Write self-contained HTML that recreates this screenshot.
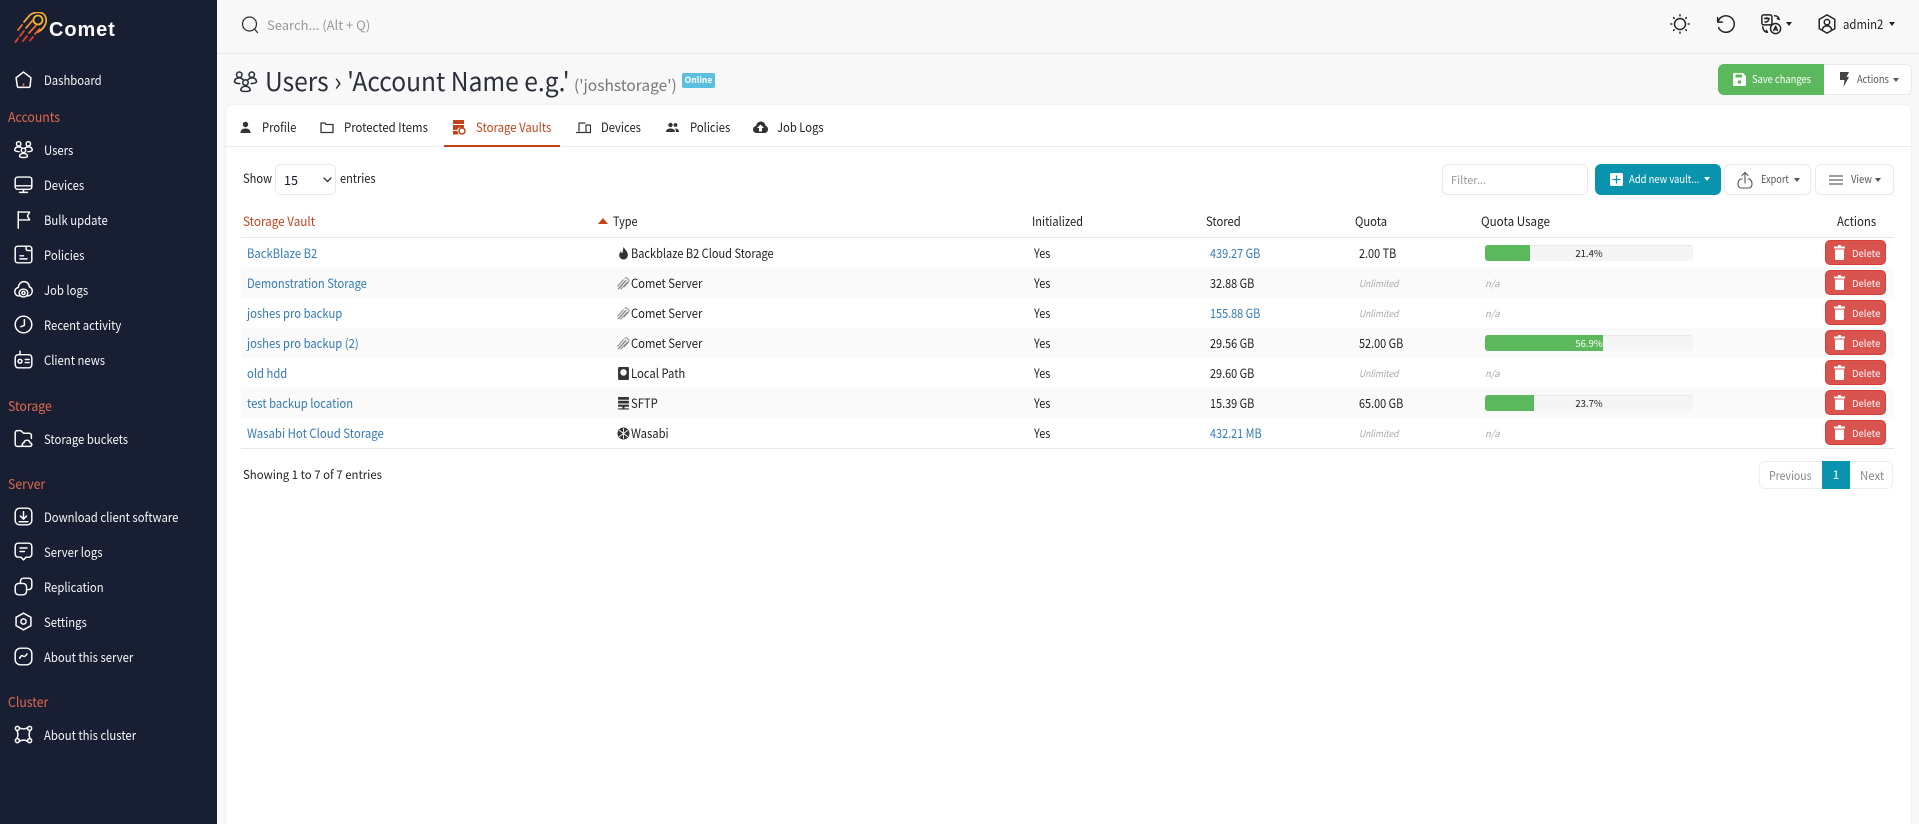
<!DOCTYPE html>
<html lang="en"><head><meta charset="utf-8"><title>Comet - Storage Vaults</title>
<style>
*{box-sizing:border-box}
html,body{margin:0;padding:0;width:1919px;height:824px;overflow:hidden;background:#f8f8f8}
body{font-family:"Noto Sans CJK JP","Liberation Sans",sans-serif;font-size:12.5px;color:#222;position:relative}
.a,.t,.i{position:absolute}
.t{white-space:nowrap;line-height:20px;height:20px;transform:scaleX(.9);transform-origin:0 50%}
.o{transform:none}
.n{transform:scaleX(.87)}
a{color:inherit;text-decoration:none}
#side{left:0;top:0;width:217px;height:824px;background:#181f33;position:absolute;color:#fff}
#side .t{left:44px;font-size:13px;color:#f4f5f7;transform:scaleX(.87)}
#side .h{left:8px;font-size:13.5px;color:#e2694c;transform:scaleX(.91)}
#side svg{position:absolute;left:13px;width:21px;height:21px;fill:none;stroke:#fff;stroke-width:1.7;stroke-linecap:round;stroke-linejoin:round}
#top{position:absolute;left:217px;top:0;width:1702px;height:54px;border-bottom:1px solid #e8e8e8;background:#f8f8f8}
#card{position:absolute;left:226px;top:105px;width:1685px;height:719px;background:#fff;border-radius:6px 6px 0 0;box-shadow:0 0 2px rgba(0,0,0,.08)}
.i{fill:none;stroke:#222;stroke-width:1.6;stroke-linecap:round;stroke-linejoin:round}
.car{position:absolute;width:0;height:0;border-left:3.5px solid transparent;border-right:3.5px solid transparent;border-top:4px solid #222}
.btn{position:absolute;background:#fff;border:1px solid #e9e9e9;border-radius:6px}
.stripe{position:absolute;left:241px;width:1653px;height:30px;background:#fafafa}
.l{color:#337ab7}
.g{color:#a8a8a8;font-style:italic;font-size:9.5px;transform:scaleX(.9)}
.na{transform:none}
.bar{position:absolute;left:1485px;width:208px;height:16px;background:#f5f5f5;border-radius:3px;overflow:hidden;box-shadow:inset 0 1px 1px rgba(0,0,0,.06)}
.bar i{position:absolute;left:0;top:0;bottom:0;background:#5cb85c}
.bar b{position:absolute;left:0;right:0;top:0;line-height:16px;text-align:center;font-size:9.5px;font-weight:400;color:#222}
.del{position:absolute;left:1825px;width:61px;height:25px;background:#d9534f;border:1px solid #d43f3a;border-radius:5px;color:#fff;font-size:9.5px;line-height:24px;padding-left:26px}
.del svg{position:absolute;left:8px;top:4px;width:11px;height:15px;fill:#fff}
.th{font-size:12.5px;color:#222}
.ty{position:absolute;left:617px;width:13px;height:13px;fill:#333}
</style></head><body>
<svg width="0" height="0" style="position:absolute"><defs>
<symbol id="trash" viewBox="0 0 11 15"><path d="M4 0h3v1.500h4V3.500H0V1.500h4zM1 4.500h9V13.500a1.500 1.500 0 0 1-1.500 1.500h-6A1.500 1.500 0 0 1 1 13.500z"/></symbol>
<symbol id="comet" viewBox="0 0 13 13"><path d="M.8 12.200 8.500 3.500M.5 9.500 6.500 2.500M3.500 12.500 10.500 5M2 11.500 9.500 3M7.500 1.500 9.500.8 12 3l-.5 2-4.500 5" fill="none" stroke="#8a8a8a" stroke-width="1"/></symbol>
</defs></svg>

<nav id="side">
<svg style="left:14px;top:12px;width:36px;height:36px;stroke:none" viewBox="0 0 36 36"><g fill="none" stroke-linecap="round" stroke-width="1.800">
<circle cx="24" cy="8" r="4.500" stroke="#f4b52e"/>
<path d="M16 3C19 .5 24-.5 28 1c4 2 5 7 3.500 11-1.300 3.500-4 6-7.500 8" stroke="#f2a82f"/>
<path d="M16 3 10 10" stroke="#f2a030"/><path d="M8 13 4 18" stroke="#ee7a32"/>
<path d="M19 8 12 16" stroke="#f08a32"/><path d="M10 19 6 24M4 26.500 1.500 30" stroke="#df4a2e"/>
<path d="M22 13.500 15 21" stroke="#ea6a30"/><path d="M13 24 9 29" stroke="#dc3f2e"/>
<path d="M25.500 17 21 22" stroke="#e8602f"/><path d="M19 25 16 28.500" stroke="#dc3f2e"/></g></svg>
<div class="t o" style="left:49px;top:16px;height:28px;line-height:28px;font-family:'Liberation Sans',sans-serif;font-weight:700;font-size:20px;letter-spacing:.9px;color:#fff;transform:none">Comet</div>

<svg style="top:69px" viewBox="0 0 24 24"><path d="M3.500 10 12 3.500l8.500 6.500-1 10a1.500 1.500 0 0 1-1.500 1H6.500a1.500 1.500 0 0 1-1.500-1z"/><path d="M12 17v3" stroke="#e2694c"/></svg>
<div class="t" style="top:70px">Dashboard</div>
<div class="t h" style="top:106px">Accounts</div>

<svg style="top:139px" viewBox="0 0 24 24"><circle cx="6.500" cy="5.500" r="2.500"/><circle cx="17.500" cy="5.500" r="2.500"/><circle cx="12" cy="13" r="2.500"/><path d="M2 13c0-3 2-4 4.500-4s3 .5 4 1.500M22 13c0-3-2-4-4.500-4s-3 .5-4 1.500M2 13c1 1 3 1.500 5 1.500M22 13c-1 1-3 1.500-5 1.500M7.500 20c0-2.500 2-3.500 4.500-3.500s4.500 1 4.500 3.500c-1 1.500-8 1.500-9 0z"/></svg>
<div class="t" style="top:140px">Users</div>
<svg style="top:174px" viewBox="0 0 24 24"><rect x="2.500" y="3.500" width="19" height="14" rx="3"/><path d="M2.500 13.500h19M12 17.500v3.500M7.500 21h9"/></svg>
<div class="t" style="top:175px">Devices</div>
<svg style="top:209px" viewBox="0 0 24 24"><path d="M6 22V3M6 3.500h13l-2.500 4.500 2.500 4.500H6"/></svg>
<div class="t" style="top:210px">Bulk update</div>
<svg style="top:244px" viewBox="0 0 24 24"><path d="M6 2.500h12.500a3 3 0 0 1 3 3v13a3 3 0 0 1-3 3h-13a3 3 0 0 1-3-3V5.500a3 3 0 0 1 3-3zM8 17h8M8 13.500h4M15 2.500v3a2 2 0 0 0 2 2h4.500"/></svg>
<div class="t" style="top:245px">Policies</div>
<svg style="top:279px" viewBox="0 0 24 24"><path d="M7 19.500c-3 0-5-2.200-5-5 0-2.600 1.800-4.500 4-4.800C6.500 5.800 9 3 12.500 3c3.600 0 6 2.700 6.300 6 2 .8 3.200 2.500 3.200 4.800 0 3-2 5.200-5 5.700"/><ellipse cx="12" cy="16" rx="5" ry="4.500"/><circle cx="12" cy="16" r="1.800"/></svg>
<div class="t" style="top:280px">Job logs</div>
<svg style="top:314px" viewBox="0 0 24 24"><circle cx="12" cy="12" r="9.500"/><path d="M13 6.500v6.500l-4 1.500"/></svg>
<div class="t" style="top:315px">Recent activity</div>
<svg style="top:349px" viewBox="0 0 24 24"><rect x="2.500" y="6.500" width="19" height="15" rx="3.500"/><path d="M8 6.500V2.500"/><circle cx="8" cy="14" r="2.200"/><path d="M14 12h4.500M14 15.500h4.500"/></svg>
<div class="t" style="top:350px">Client news</div>
<div class="t h" style="top:395px">Storage</div>
<svg style="top:428px" viewBox="0 0 24 24"><path d="M10 21H5a2.500 2.500 0 0 1-2.500-2.500v-13A2.500 2.500 0 0 1 5 3h4l3 3h6.500A2.500 2.500 0 0 1 21 8.500V12"/><path d="M12.500 21c-1.500 0-2-1-2-2s.8-2 2-2c.2-1.800 1.500-3 3.500-3s3.300 1.200 3.500 3c1.200 0 2 1 2 2s-.8 2-2 2z"/></svg>
<div class="t" style="top:429px">Storage buckets</div>
<div class="t h" style="top:473px">Server</div>
<svg style="top:506px" viewBox="0 0 24 24"><rect x="2.500" y="2.500" width="19" height="19" rx="5"/><path d="M12 6.500v8M8.500 11.500 12 15l3.500-3.500M7 18h10"/></svg>
<div class="t" style="top:507px">Download client software</div>
<svg style="top:541px" viewBox="0 0 24 24"><path d="M6 2.500h12a3.500 3.500 0 0 1 3.500 3.500v9a3.500 3.500 0 0 1-3.500 3.500h-3l-3 3-3-3H6A3.500 3.500 0 0 1 2.500 15V6A3.500 3.500 0 0 1 6 2.500zM8 8h8M8 12h5"/></svg>
<div class="t" style="top:542px">Server logs</div>
<svg style="top:576px" viewBox="0 0 24 24"><rect x="2.500" y="8.500" width="13" height="13" rx="4"/><path d="M8.500 8.500V6a3.500 3.500 0 0 1 3.500-3.500h6A3.500 3.500 0 0 1 21.500 6v6a3.500 3.500 0 0 1-3.500 3.500h-2.500"/></svg>
<div class="t" style="top:577px">Replication</div>
<svg style="top:611px" viewBox="0 0 24 24"><path d="M12 2.500l8.500 4.700v9.600L12 21.500l-8.500-4.700V7.200z"/><circle cx="12" cy="12" r="3"/></svg>
<div class="t" style="top:612px">Settings</div>
<svg style="top:646px" viewBox="0 0 24 24"><rect x="2.500" y="2.500" width="19" height="19" rx="6"/><path d="M7.500 14c1.500-3 2.500-3.500 4-2.500s2.500.5 4.500-2.500"/></svg>
<div class="t" style="top:647px">About this server</div>
<div class="t h" style="top:691px">Cluster</div>
<svg style="top:724px" viewBox="0 0 24 24"><path d="M7.500 4.500c3 1.500 6 1.500 9 0M7.500 19.500c3-1.500 6-1.500 9 0M4.500 7.500c1.500 3 1.500 6 0 9M19.500 7.500c-1.500 3-1.500 6 0 9"/><circle cx="5" cy="5" r="2.300"/><circle cx="19" cy="5" r="2.300"/><circle cx="5" cy="19" r="2.300"/><circle cx="19" cy="19" r="2.300"/></svg>
<div class="t" style="top:725px">About this cluster</div>
</nav>

<header id="top"></header>
<svg class="i" style="left:241px;top:16px;stroke:#333;stroke-width:1.300" width="18" height="18" viewBox="0 0 18 18"><circle cx="8.500" cy="8" r="7"/><path d="M13.500 13l3 3.500"/></svg>
<div class="t o" style="left:267px;top:15px;color:#999;font-size:13px">Search... (Alt + Q)</div>

<svg class="i" style="left:1669px;top:13px" width="22" height="22" viewBox="0 0 24 24"><circle cx="12" cy="12" r="6"/><path d="M12 2v1M12 21v1M2 12h1M21 12h1M5 5l.7.700M18.300 18.300l.7.700M19 5l-.7.700M5.700 18.300 5 19"/></svg>
<svg class="i" style="left:1714px;top:13px" width="22" height="22" viewBox="0 0 24 24"><path d="M4 5v5h5M4.300 10A9 9 0 1 1 5 16"/></svg>
<svg class="i" style="left:1760px;top:13px" width="22" height="22" viewBox="0 0 24 24"><rect x="2" y="2" width="11" height="11" rx="2"/><circle cx="17" cy="17" r="5.500"/><path d="M5 6h5M7.500 5v1M5.500 10c2 0 3.500-1 4-3M15 19l2-4.500 2 4.500M15.500 18h3M16 3c2.500 0 4.500 1.500 5 4M21 7l-2-1M3 15c0 3 2 6 5 6M8 21l-1-2"/></svg>
<span class="car" style="left:1786px;top:22px"></span>
<svg class="i" style="left:1816px;top:13px" width="22" height="22" viewBox="0 0 24 24"><path d="M12 2l8.500 5v10L12 22l-8.500-5V7z"/><circle cx="12" cy="10" r="3"/><path d="M7 18c.5-3 2.500-4 5-4s4.500 1 5 4"/></svg>
<div class="t" style="left:1843px;top:14px;font-size:13px;transform:scaleX(.875)">admin2</div>
<span class="car" style="left:1889px;top:22px"></span>

<svg class="i" style="left:233px;top:69px;stroke:#2a2f3a;stroke-width:1.500" width="25" height="25" viewBox="0 0 24 24"><circle cx="6" cy="5.500" r="2.600"/><circle cx="18" cy="5.500" r="2.600"/><circle cx="12" cy="13" r="2.600"/><path d="M1.500 12.500c0-3 2-4 4.500-4 1.500 0 2.500.5 3.500 1.500M22.500 12.500c0-3-2-4-4.500-4-1.500 0-2.500.5-3.500 1.500M1.500 12.500c1 1 3 1.500 5 1.500M22.500 12.500c-1 1-3 1.500-5 1.500M7.500 20.500c0-2.500 2-4 4.500-4s4.500 1.500 4.500 4c-1 1.500-8 1.500-9 0z"/></svg>
<div class="t" style="left:265px;top:61px;height:40px;line-height:40px;font-size:26px;color:#2a2f3a;transform:scaleX(.945)">Users › 'Account Name e.g.'</div>
<div class="t o" style="left:574px;top:75px;font-size:15.500px;color:#777">('joshstorage')</div>
<div class="a" style="left:682px;top:73px;width:33px;height:15px;background:#5bc0de;border-radius:2px;color:#fff;font-size:8.500px;font-weight:700;line-height:15px;text-align:center">Online</div>

<div class="a" style="left:1718px;top:64px;width:106px;height:31px;background:#5cb85c;border-radius:6px 0 0 6px"></div>
<svg class="a" style="left:1733px;top:73px" width="13" height="13" viewBox="0 0 13 13"><path fill="#fff" d="M1.500 0H10l3 3v8.500A1.500 1.500 0 0 1 11.500 13h-10A1.500 1.500 0 0 1 0 11.500v-10A1.500 1.500 0 0 1 1.500 0z"/><rect x="2.500" y="1.500" width="6.500" height="3" fill="#5cb85c"/><circle cx="6.500" cy="9" r="1.800" fill="#5cb85c"/></svg>
<div class="t" style="left:1752px;top:70px;color:#fff;font-size:10.500px;transform:scaleX(.89)">Save changes</div>
<div class="a" style="left:1824px;top:64px;width:88px;height:31px;background:#fff;border:1px solid #e9e9e9;border-left:0;border-radius:0 6px 6px 0"></div>
<svg class="a" style="left:1840px;top:72px" width="9" height="15" viewBox="0 0 9 15"><path fill="#444" d="M0 0h9L6.500 5H9L3.500 15 4.500 8H0z"/></svg>
<div class="t" style="left:1857px;top:70px;color:#555;font-size:10.500px;transform:scaleX(.88)">Actions</div>
<span class="car" style="left:1893px;top:78px;border-top-color:#555"></span>

<main id="card"></main>
<div class="a" style="left:226px;top:146px;width:1685px;height:1px;background:#ececec"></div>
<div class="a" style="left:444px;top:145px;width:116px;height:2px;background:#c4421b"></div>

<svg class="a" style="left:239px;top:121px" width="13" height="13" viewBox="0 0 13 13"><circle cx="6.500" cy="3.500" r="2.700" fill="#333"/><path fill="#333" d="M1.500 12c0-3 2-4.500 5-4.500s5 1.500 5 4.500z"/></svg>
<div class="t" style="left:262px;top:117px">Profile</div>
<svg class="i" style="left:320px;top:121px;stroke:#333;stroke-width:1.300" width="14" height="13" viewBox="0 0 14 13"><path d="M1 2h4l1 1.500h7V11.500H1z"/></svg>
<div class="t" style="left:344px;top:117px;transform:scaleX(.91)">Protected Items</div>
<svg class="a" style="left:452px;top:120px" width="14" height="15" viewBox="0 0 14 15"><path fill="#c4421b" d="M1 0h11v4H1zM1 5h11v2.500H7.500A4 4 0 0 0 5 10H1zM1 11h4.500l1 3.500H1z"/><circle cx="10" cy="11" r="3" fill="none" stroke="#c4421b" stroke-width="1.500"/></svg>
<div class="t" style="left:476px;top:117px;color:#c4421b;transform:scaleX(.91)">Storage Vaults</div>
<svg class="i" style="left:576px;top:121px;stroke:#333;stroke-width:1.200" width="15" height="13" viewBox="0 0 15 13"><path d="M9 2H3v8M0.500 11.500H9"/><rect x="10" y="4" width="4.500" height="7.500" rx=".5"/></svg>
<div class="t" style="left:601px;top:117px">Devices</div>
<svg class="a" style="left:666px;top:121px" width="13" height="13" viewBox="0 0 13 13"><circle cx="4.500" cy="4" r="2.200" fill="#333"/><circle cx="9.500" cy="4" r="1.900" fill="#333"/><path fill="#333" d="M0 11c0-2.500 2-3.500 4.500-3.500S9 8.500 9 11zM10 11c0-1.500-.3-2.500-1.200-3.300 2.500-.4 4.200.8 4.200 3.300z"/></svg>
<div class="t" style="left:690px;top:117px">Policies</div>
<svg class="a" style="left:753px;top:121px" width="15" height="13" viewBox="0 0 15 13"><path fill="#333" d="M3.500 12C1.500 12 0 10.500 0 8.500 0 6.700 1.300 5.300 3 5 3.500 2.300 5.300.5 7.800.5c2.600 0 4.500 1.900 4.700 4.400 1.500.3 2.500 1.600 2.500 3.300 0 2-1.500 3.800-3.500 3.800z"/><path fill="#fff" d="M7.500 3.500 11 7H9v3.500H6V7H4z"/></svg>
<div class="t" style="left:777px;top:117px">Job Logs</div>

<div class="t" style="left:243px;top:168px;transform:scaleX(.89)">Show</div>
<div class="btn" style="left:275px;top:164px;width:61px;height:31px"></div>
<div class="t o" style="left:284px;top:170px;font-size:12.500px;color:#1a1030">15</div>
<svg class="i" style="left:323px;top:177px;stroke:#333;stroke-width:1.300" width="9" height="6" viewBox="0 0 9 6"><path d="M1 1l3.500 3.500L8 1"/></svg>
<div class="t" style="left:340px;top:168px;transform:scaleX(.88)">entries</div>

<div class="btn" style="left:1442px;top:164px;width:146px;height:31px"></div>
<div class="t o" style="left:1451px;top:170px;color:#999;font-size:11px">Filter...</div>
<div class="a" style="left:1595px;top:164px;width:126px;height:31px;background:#0a93ad;border-radius:6px"></div>
<svg class="a" style="left:1610px;top:173px" width="13" height="13" viewBox="0 0 13 13"><rect width="13" height="13" rx="1.500" fill="#fff"/><path d="M6.500 2.500v8M2.500 6.500h8" stroke="#0a93ad" stroke-width="1.300"/></svg>
<div class="t" style="left:1629px;top:170px;color:#fff;font-size:10.500px">Add new vault...</div>
<span class="car" style="left:1704px;top:177px;border-top-color:#fff"></span>
<div class="btn" style="left:1724px;top:164px;width:87px;height:31px"></div>
<svg class="i" style="left:1737px;top:171px;stroke:#555;stroke-width:1.100" width="16" height="18" viewBox="0 0 16 18"><path d="M5 8H3.500C2 9 1 10 1 13c0 2.500 1.500 4 3 4h8c1.500 0 3-1.500 3-4 0-3-1-4-2.500-5H11M8 12V1.500M5 4.500l3-3 3 3"/></svg>
<div class="t" style="left:1761px;top:170px;color:#555;font-size:10.500px;transform:scaleX(.87)">Export</div>
<span class="car" style="left:1794px;top:178px;border-top-color:#555"></span>
<div class="btn" style="left:1815px;top:164px;width:79px;height:31px"></div>
<svg class="i" style="left:1829px;top:175px;stroke:#666;stroke-width:1.300" width="14" height="10" viewBox="0 0 14 10"><path d="M0 1h14M0 5h14M0 9h14"/></svg>
<div class="t" style="left:1851px;top:170px;color:#555;font-size:10.500px;transform:scaleX(.9)">View</div>
<span class="car" style="left:1875px;top:178px;border-top-color:#555"></span>

<div class="t th" style="left:243px;top:211px;color:#c4421b;transform:scaleX(.935)">Storage Vault</div>
<svg class="a" style="left:598px;top:218px" width="10" height="6" viewBox="0 0 10 6"><path d="M5 0l5 6H0z" fill="#c4421b"/></svg>
<div class="t th n" style="left:613px;top:211px">Type</div>
<div class="t th" style="left:1032px;top:211px;transform:scaleX(.89)">Initialized</div>
<div class="t th" style="left:1206px;top:211px">Stored</div>
<div class="t th" style="left:1355px;top:211px">Quota</div>
<div class="t th" style="left:1481px;top:211px;transform:scaleX(.93)">Quota Usage</div>
<div class="t th" style="left:1837px;top:211px;transform:scaleX(.91)">Actions</div>
<div class="a" style="left:241px;top:237px;width:1653px;height:1px;background:#e8e8e8"></div>
<div class="stripe" style="top:268px"></div><div class="stripe" style="top:328px"></div><div class="stripe" style="top:388px"></div>
<div class="a" style="left:241px;top:448px;width:1653px;height:1px;background:#e8e8e8"></div>

<!-- rows -->
<div class="t l" style="left:247px;top:243px">BackBlaze B2</div>
<svg class="ty" style="top:247px" viewBox="0 0 12 12"><path d="M6 0c1 2 4 4 4 7.500A4 4 0 0 1 2 7.500C2 6 3 5 3.500 4c.5 1 1 1.500 1.500 1.500C5.500 4 5.500 2 6 0z"/></svg>
<div class="t" style="left:631px;top:243px;transform:scaleX(.88)">Backblaze B2 Cloud Storage</div>
<div class="t n" style="left:1034px;top:243px">Yes</div><div class="t l n" style="left:1210px;top:243px">439.27 GB</div><div class="t n" style="left:1359px;top:243px">2.00 TB</div>
<div class="bar" style="top:245px"><i style="width:21.400%"></i><b>21.4%</b></div>
<div class="del" style="top:240px"><svg><use href="#trash"/></svg>Delete</div>

<div class="t l" style="left:247px;top:273px;transform:scaleX(.89)">Demonstration Storage</div>
<svg class="ty" style="top:277px"><use href="#comet"/></svg>
<div class="t" style="left:631px;top:273px">Comet Server</div>
<div class="t n" style="left:1034px;top:273px">Yes</div><div class="t n" style="left:1210px;top:273px">32.88 GB</div><div class="t g" style="left:1359px;top:273px">Unlimited</div><div class="t g na" style="left:1485px;top:273px">n/a</div>
<div class="del" style="top:270px"><svg><use href="#trash"/></svg>Delete</div>

<div class="t l" style="left:247px;top:303px">joshes pro backup</div>
<svg class="ty" style="top:307px"><use href="#comet"/></svg>
<div class="t" style="left:631px;top:303px">Comet Server</div>
<div class="t n" style="left:1034px;top:303px">Yes</div><div class="t l n" style="left:1210px;top:303px">155.88 GB</div><div class="t g" style="left:1359px;top:303px">Unlimited</div><div class="t g na" style="left:1485px;top:303px">n/a</div>
<div class="del" style="top:300px"><svg><use href="#trash"/></svg>Delete</div>

<div class="t l" style="left:247px;top:333px">joshes pro backup (2)</div>
<svg class="ty" style="top:337px"><use href="#comet"/></svg>
<div class="t" style="left:631px;top:333px">Comet Server</div>
<div class="t n" style="left:1034px;top:333px">Yes</div><div class="t n" style="left:1210px;top:333px">29.56 GB</div><div class="t n" style="left:1359px;top:333px">52.00 GB</div>
<div class="bar" style="top:335px"><i style="width:56.900%"></i><b style="color:#fff">56.9%</b></div>
<div class="del" style="top:330px"><svg><use href="#trash"/></svg>Delete</div>

<div class="t l" style="left:247px;top:363px">old hdd</div>
<svg class="ty" style="top:367px" viewBox="0 0 12 12"><path fill-rule="evenodd" d="M2 0h8a1 1 0 0 1 1 1v10a1 1 0 0 1-1 1H2a1 1 0 0 1-1-1V1a1 1 0 0 1 1-1zM6 2a3 3 0 1 0 0 6 3 3 0 0 0 0-6z"/></svg>
<div class="t" style="left:631px;top:363px">Local Path</div>
<div class="t n" style="left:1034px;top:363px">Yes</div><div class="t n" style="left:1210px;top:363px">29.60 GB</div><div class="t g" style="left:1359px;top:363px">Unlimited</div><div class="t g na" style="left:1485px;top:363px">n/a</div>
<div class="del" style="top:360px"><svg><use href="#trash"/></svg>Delete</div>

<div class="t l" style="left:247px;top:393px">test backup location</div>
<svg class="ty" style="top:397px" viewBox="0 0 12 12"><path d="M1 0h10v2.500H1zM1 3.500h10V6H1zM1 7h10v2H7v1.500h4v1H1v-1h4V9H1z"/></svg>
<div class="t" style="left:631px;top:393px">SFTP</div>
<div class="t n" style="left:1034px;top:393px">Yes</div><div class="t n" style="left:1210px;top:393px">15.39 GB</div><div class="t n" style="left:1359px;top:393px">65.00 GB</div>
<div class="bar" style="top:395px"><i style="width:23.700%"></i><b>23.7%</b></div>
<div class="del" style="top:390px"><svg><use href="#trash"/></svg>Delete</div>

<div class="t l" style="left:247px;top:423px;transform:scaleX(.91)">Wasabi Hot Cloud Storage</div>
<svg class="ty" style="top:427px" viewBox="0 0 12 12"><circle cx="6" cy="6" r="5.500"/><path d="M2 3l8 6M2 9l8-6M6 1v10" stroke="#fff" stroke-width=".8"/></svg>
<div class="t" style="left:631px;top:423px">Wasabi</div>
<div class="t n" style="left:1034px;top:423px">Yes</div><div class="t l n" style="left:1210px;top:423px">432.21 MB</div><div class="t g" style="left:1359px;top:423px">Unlimited</div><div class="t g na" style="left:1485px;top:423px">n/a</div>
<div class="del" style="top:420px"><svg><use href="#trash"/></svg>Delete</div>

<div class="t" style="left:243px;top:465px;font-size:12px;transform:scaleX(.95)">Showing 1 to 7 of 7 entries</div>
<div class="btn" style="left:1759px;top:461px;width:134px;height:28px;border-color:#eee"></div>
<div class="t" style="left:1769px;top:466px;color:#888;font-size:12px;transform:scaleX(.875)">Previous</div>
<div class="a" style="left:1822px;top:461px;width:28px;height:28px;background:#0a93ad;color:#fff;text-align:center;line-height:28px;font-size:12px">1</div>
<div class="t" style="left:1860px;top:466px;color:#888;font-size:12px;transform:scaleX(.95)">Next</div>
</body></html>
